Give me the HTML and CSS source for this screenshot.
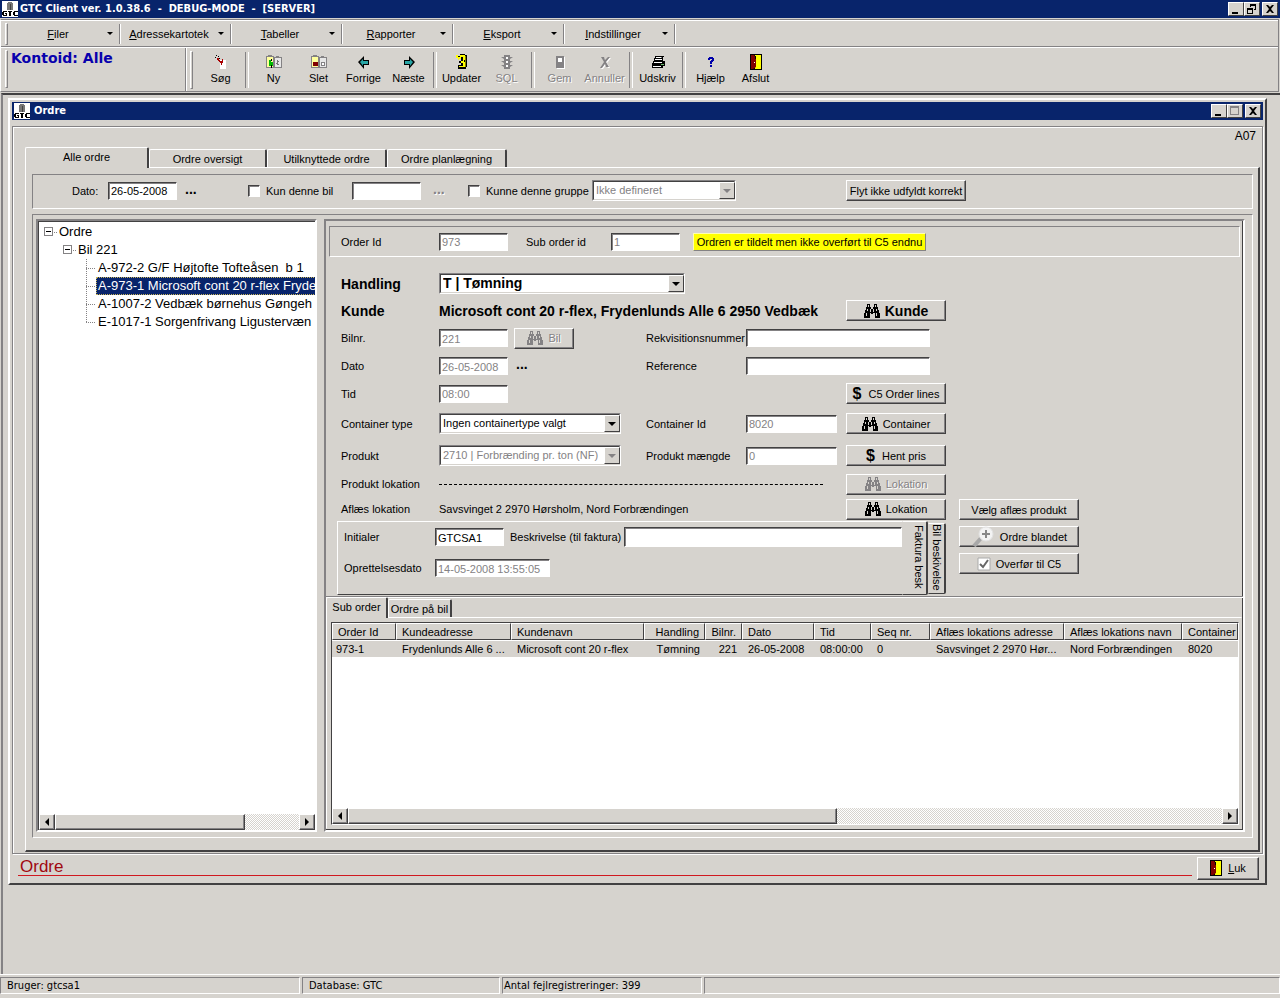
FILE: index.html
```html
<!DOCTYPE html>
<html lang="da">
<head>
<meta charset="utf-8">
<title>GTC Client</title>
<link rel="stylesheet" href="styles.css">
</head>
<body>
<svg class="defs" aria-hidden="true">
  <symbol id="binoculars" viewBox="0 0 16 14">
    <path fill="currentColor" d="M3 0h3v3h1v2h2V3h1V0h3v3h1v3h1v3h1v5h-5V9H9v1H7V9H6v5H0V9h1V6h1V3h1z"/>
    <path fill="#d6d3ce" d="M4 1h1v2H4zM11 1h1v2h-1zM3 5h1v2H3zM6 5h1v3H6zM9 5h1v3H9zM12 5h1v2h-1zM2 9h1v3H2zM12 9h1v3h-1z"/>
  </symbol>
  <symbol id="door" viewBox="0 0 12 16">
    <path d="M0 0h12v16H0z"/><path fill="#ff0" d="M5 1h6v14H5z"/><path fill="#800000" d="M1 1h3l2 3v9l-3 2H1z"/><path d="M5 2h1v3H5z"/><path fill="#fff" d="M4 8h1v1H4z"/>
  </symbol>
  <symbol id="gtc" viewBox="0 0 16 16">
    <path fill="#fff" d="M0 0h16v16H0z"/><path fill="#777" d="M6 1h4v1h1v7H5V2h1z"/><path fill="#444" d="M8 3h1v6H8z"/>
    <path d="M1 10h4v1H2v3h2v-1H3v-1h2v3H1v-1H0v-3h1zM6 10h4v1H9v4H7v-4H6zM12 10h4v1h-3v3h3v1h-4v-1h-1v-3h1z"/>
  </symbol>
</svg>

<div class="app">
  <header class="titlebar">
    <svg class="logo"><use href="#gtc"/></svg>
    <h1 class="title">GTC Client ver. 1.0.38.6&nbsp; -&nbsp; DEBUG-MODE&nbsp; -&nbsp; [SERVER]</h1>
    <div class="winbtns">
      <button class="winbtn" aria-label="Minimer"><svg viewBox="0 0 10 10"><path d="M1 8h6v2H1z"/></svg></button>
      <button class="winbtn" aria-label="Gendan"><svg viewBox="0 0 10 10"><path d="M3 0h6v6H7V5h1V2H4v1H3zM0 4h6v6H0zM1 6v3h4V6z" fill-rule="evenodd"/></svg></button>
      <button class="winbtn close" aria-label="Luk vindue"><svg viewBox="0 0 10 10"><path d="M1 1h2l2 2 2-2h2L6 5l3 4H7L5 7 3 9H1l3-4z"/></svg></button>
    </div>
  </header>

  <div class="coolbar">
    <nav class="menubar">
      <span class="grip"></span>
      <button class="menu"><span><u>F</u>iler</span><i class="arrow"></i></button>
      <button class="menu"><span><u>A</u>dressekartotek</span><i class="arrow"></i></button>
      <button class="menu"><span><u>T</u>abeller</span><i class="arrow"></i></button>
      <button class="menu"><span><u>R</u>apporter</span><i class="arrow"></i></button>
      <button class="menu"><span><u>E</u>ksport</span><i class="arrow"></i></button>
      <button class="menu"><span><u>I</u>ndstillinger</span><i class="arrow"></i></button>
    </nav>
    <div class="toolrow">
      <div class="account"><span class="grip"></span><span class="account-text">Kontoid: Alle</span></div>
      <div class="toolbar">
        <span class="grip"></span>
        <button class="tool"><svg viewBox="0 0 16 16"><path fill="#fff" d="M7 6h6v9H7z"/><path fill="#a00" d="M4 4h2v2h1v1h2V5h1v4H9v2H8V9H7V8H6V7H5V6H4z"/><path d="M3 1h1v1H3zM5 2h1v1H5zM2 3h1v1H2zM6 4h1v1H6z"/></svg>Søg</button>
        <span class="sep"></span>
        <button class="tool"><svg viewBox="0 0 16 16"><path fill="#848284" d="M0 2h2V1h4v1h2v12H0zM8 3h2V2h3v1h3v11H8z"/><path fill="#ffff9c" d="M1 3h6v10H1z"/><path fill="#e7e7e7" d="M9 4h6v9H9z"/><path fill="#0b0" d="M3 6h2v2h2v4H3z"/><path d="M5 5h1v2H5zM5 11h1v3H5z"/><path fill="#777" d="M11 6h1v1h1v1h-1v2h1v1h-2v-1h-1V9h1z"/></svg>Ny</button>
        <button class="tool"><svg viewBox="0 0 16 16"><path fill="#848284" d="M0 2h2V1h4v1h2v12H0zM8 3h2V2h3v1h3v11H8z"/><path fill="#ffff9c" d="M1 3h6v10H1z"/><path fill="#e7e7e7" d="M9 4h6v9H9z"/><path fill="#800000" d="M2 8h5v4H2z"/><path fill="#848284" d="M10 8h4v4h-4z"/><path fill="#fff" d="M11 9h2v2h-2z"/></svg>Slet</button>
        <button class="tool"><svg viewBox="0 0 16 16"><path d="M2 8l6-6v4h5v5H8v4z"/><path fill="#28a5a5" d="M4 8l3-3v2h5v3H7v2z"/></svg>Forrige</button>
        <button class="tool"><svg viewBox="0 0 16 16"><path d="M14 8L8 2v4H3v5h5v4z"/><path fill="#28a5a5" d="M12 8L9 5v2H4v3h5v2z"/></svg>Næste</button>
        <span class="sep"></span>
        <button class="tool"><svg viewBox="0 0 16 16"><path d="M6 0h5v1h2v12h-1v2H4v-4h3V9H5V7h2V4H3V2h3z"/><path fill="#ff0" d="M6 1h5v5h-1v2h1v5H5v-1h4V9H7V7h2V3H6z"/><path fill="#848200" d="M11 2h1v11h-1z"/><path fill="#ff0" d="M2 1h2v2h3v2H5v1H4V4H2z"/></svg>Updater</button>
        <button class="tool" disabled><svg viewBox="0 0 16 16"><path fill="#848284" d="M5 1h6v2h3l-3 2v2h3l-3 2v2h3l-3 2v2H5v-2l-3-2h3V9L2 7h3V5L2 3h3z"/><path fill="#fff" d="M7 3h2v2H7zM7 7h2v2H7zM7 11h2v2H7z"/></svg>SQL</button>
        <span class="sep"></span>
        <button class="tool" disabled><svg viewBox="0 0 16 16"><path fill="#fff" d="M5 3h8v12H5z"/><path fill="#848284" d="M4 2h8v12H4z"/><path fill="#fff" d="M6 4h4v4H6z"/></svg>Gem</button>
        <button class="tool" disabled><svg viewBox="0 0 16 16"><path fill="#fff" d="M5 4h2l2 3 3-3h2l-4 5 3 5h-2l-2-3-3 4H4l4-6z"/><path fill="#848284" d="M4 3h3l1 3 3-3h2L9 8l3 5H9l-1-3-3 4H3l4-6z"/></svg>Annuller</button>
        <span class="sep"></span>
        <button class="tool"><svg viewBox="0 0 16 16"><path d="M5 2h9v1h-1v4h2v5h-2v2H2V9h1V7h1V4h1z"/><path fill="#fff" d="M6 3h6l-1 1H6zM5 5h7v1H5zM4 8h8v1H4zM3 12h8v1H3z"/><path fill="#6b6" d="M11 10h3v1h-3z"/></svg>Udskriv</button>
        <span class="sep"></span>
        <button class="tool"><svg viewBox="0 0 16 16"><path fill="#00a" d="M6 3h4v1h1v3h-1v1H9v2H7V7h1V6h1V5H7v1H5V4h1zM7 11h2v2H7z"/></svg>Hjælp</button>
        <button class="tool"><svg viewBox="0 0 12 16"><use href="#door"/></svg>Afslut</button>
      </div>
    </div>
  </div>

  <main class="mdi">
    <section class="child">
      <header class="titlebar">
        <svg class="logo"><use href="#gtc"/></svg>
        <h2 class="title">Ordre</h2>
        <div class="winbtns">
          <button class="winbtn" aria-label="Minimer"><svg viewBox="0 0 10 10"><path d="M1 8h6v2H1z"/></svg></button>
          <button class="winbtn" aria-label="Maksimer" disabled><svg viewBox="0 0 10 10"><path fill="#848284" d="M0 0h9v9H0zM1 2v6h7V2z" fill-rule="evenodd"/></svg></button>
          <button class="winbtn close" aria-label="Luk vindue"><svg viewBox="0 0 10 10"><path d="M1 1h2l2 2 2-2h2L6 5l3 4H7L5 7 3 9H1l3-4z"/></svg></button>
        </div>
      </header>

      <div class="frame">
        <div class="code">A07</div>
        <div class="tabs" role="tablist">
          <button class="tab active" role="tab" aria-selected="true">Alle ordre</button>
          <button class="tab" role="tab">Ordre oversigt</button>
          <button class="tab" role="tab">Utilknyttede ordre</button>
          <button class="tab" role="tab">Ordre planlægning</button>
        </div>
        <div class="page">
          <div class="filter">
            <label class="f-date" for="fdate">Dato:</label>
            <input class="field short" id="fdate" type="text" value="26-05-2008">
            <button class="dots d1" aria-label="Vælg dato">...</button>
            <label class="check c1"><input type="checkbox">Kun denne bil</label>
            <input class="field short" type="text" aria-label="Bil">
            <button class="dots d2" aria-label="Vælg bil" disabled>...</button>
            <label class="check c2"><input type="checkbox">Kunne denne gruppe</label>
            <span class="combo group off"><select aria-label="Gruppe" disabled><option>Ikke defineret</option></select><i class="drop"></i></span>
            <button class="btn flyt">Flyt ikke udfyldt korrekt</button>
          </div>

          <div class="split">
            <div class="tree">
              <ul class="nodes">
                <li><span class="exp"></span><span class="node">Ordre</span>
                  <ul>
                    <li><span class="exp"></span><span class="node">Bil 221</span>
                      <ul class="leaves">
                        <li><span class="node">A-972-2 G/F Højtofte Tofteåsen&nbsp; b 1</span></li>
                        <li><span class="node sel">A-973-1 Microsoft cont 20 r-flex Fryde</span></li>
                        <li><span class="node">A-1007-2 Vedbæk børnehus Gøngeh</span></li>
                        <li><span class="node">E-1017-1 Sorgenfrivang Ligustervæn</span></li>
                      </ul>
                    </li>
                  </ul>
                </li>
              </ul>
              <div class="hscroll"><button class="sb left" aria-label="Rul til venstre"></button><span class="thumb t1"></span><button class="sb right" aria-label="Rul til højre"></button></div>
            </div>

            <div class="detail">
              <div class="ids">
                <label class="w-label" for="oid">Order Id</label>
                <input class="field short" id="oid" type="text" value="973" disabled>
                <label class="w-sub" for="sid">Sub order id</label>
                <input class="field short" id="sid" type="text" value="1" disabled>
                <button class="notice">Ordren er tildelt men ikke overført til C5 endnu</button>
              </div>

              <div class="form">
                <label class="lb big" for="handling">Handling</label>
                <span class="combo handling big"><select id="handling"><option>T | Tømning</option></select><i class="drop"></i></span>

                <span class="lb big r2">Kunde</span>
                <span class="big customer">Microsoft cont 20 r-flex, Frydenlunds Alle 6 2950 Vedbæk</span>
                <button class="btn c5 r2 big"><svg><use href="#binoculars"/></svg>Kunde</button>

                <label class="lb r3" for="bil">Bilnr.</label>
                <span class="cell r3"><input class="field short" id="bil" type="text" value="221" disabled><button class="btn bil" disabled><svg><use href="#binoculars"/></svg>Bil</button></span>
                <label class="c3 r3" for="rekv">Rekvisitionsnummer</label>
                <input class="field long r3" id="rekv" type="text">

                <label class="lb r4" for="dato">Dato</label>
                <span class="cell r4"><input class="field short" id="dato" type="text" value="26-05-2008" disabled><button class="dots" aria-label="Vælg dato">...</button></span>
                <label class="c3 r4" for="ref">Reference</label>
                <input class="field long r4" id="ref" type="text">

                <label class="lb r5" for="tid">Tid</label>
                <span class="cell r5"><input class="field short" id="tid" type="text" value="08:00" disabled></span>
                <button class="btn c5 r5"><b class="dollar">$</b>C5 Order lines</button>

                <label class="lb r6" for="ctype">Container type</label>
                <span class="combo mid r6"><select id="ctype"><option>Ingen containertype valgt</option></select><i class="drop"></i></span>
                <label class="c3 r6" for="cid">Container Id</label>
                <input class="field id r6" id="cid" type="text" value="8020" disabled>
                <button class="btn c5 r6"><svg><use href="#binoculars"/></svg>Container</button>

                <label class="lb r7" for="prod">Produkt</label>
                <span class="combo mid off r7"><select id="prod" disabled><option>2710 | Forbrænding pr. ton (NF)</option></select><i class="drop"></i></span>
                <label class="c3 r7" for="amount">Produkt mængde</label>
                <input class="field id r7" id="amount" type="text" value="0" disabled>
                <button class="btn c5 r7"><b class="dollar">$</b>Hent pris</button>

                <span class="lb r8">Produkt lokation</span>
                <span class="dash r8"></span>
                <button class="btn c5 r8" disabled><svg><use href="#binoculars"/></svg>Lokation</button>

                <span class="lb r9">Aflæs lokation</span>
                <span class="place r9">Savsvinget 2 2970 Hørsholm, Nord Forbrændingen</span>
                <button class="btn c5 r9"><svg><use href="#binoculars"/></svg>Lokation</button>

                <div class="side">
                  <button class="btn">Vælg aflæs produkt</button>
                  <button class="btn"><svg class="mag" viewBox="0 0 24 21"><path d="M3 20l8-9" stroke="#a8a8a8" stroke-width="4"/><circle cx="15" cy="8" r="7" fill="#f3f3f3" stroke="#e2e2e2"/><path d="M11 8h8M15 4v8" stroke="#888" stroke-width="2"/></svg>Ordre blandet</button>
                  <button class="btn"><svg class="tick" viewBox="0 0 14 14"><path fill="#fff" stroke="#aaa" d="M1 1h12v12H1z"/><path d="M3 7l3 3 5-7" fill="none" stroke="#666" stroke-width="2"/></svg>Overfør til C5</button>
                </div>

                <div class="invoice">
                  <div class="inv-page">
                    <label for="init">Initialer</label>
                    <input class="field short i1" id="init" type="text" value="GTCSA1">
                    <label for="desc">Beskrivelse (til faktura)</label>
                    <input class="field tall" id="desc" type="text">
                    <label for="created">Oprettelsesdato</label>
                    <input class="field created" id="created" type="text" value="14-05-2008 13:55:05" disabled>
                  </div>
                  <button class="vtab on">Faktura besk</button>
                  <button class="vtab">Bil beskivelse</button>
                </div>
              </div>

              <div class="lower">
                <div class="tabs small" role="tablist">
                  <button class="tab active" role="tab" aria-selected="true">Sub order</button>
                  <button class="tab" role="tab">Ordre på bil</button>
                </div>
                <div class="lowerpage">
                  <div class="list">
                    <table>
                      <colgroup><col class="k64"><col class="k115"><col class="k133"><col class="k61"><col class="k37"><col class="k72"><col class="k57"><col class="k59"><col class="k134"><col class="k118"><col></colgroup>
                      <thead><tr><th>Order Id</th><th>Kundeadresse</th><th>Kundenavn</th><th class="num">Handling</th><th class="num">Bilnr.</th><th>Dato</th><th>Tid</th><th>Seq nr.</th><th>Aflæs lokations adresse</th><th>Aflæs lokations navn</th><th>Container</th></tr></thead>
                      <tbody><tr><td>973-1</td><td>Frydenlunds Alle 6 ...</td><td>Microsoft cont 20 r-flex</td><td class="num">Tømning</td><td class="num">221</td><td>26-05-2008</td><td>08:00:00</td><td>0</td><td>Savsvinget 2 2970 Hør...</td><td>Nord Forbrændingen</td><td>8020</td></tr></tbody>
                    </table>
                    <div class="hscroll"><button class="sb left" aria-label="Rul til venstre"></button><span class="thumb t2"></span><button class="sb right" aria-label="Rul til højre"></button></div>
                  </div>
                </div>
              </div>
            </div>
          </div>
        </div>
      </div>

      <footer class="childfoot">
        <span class="caption">Ordre</span>
        <button class="btn luk"><svg class="door" viewBox="0 0 12 16"><use href="#door"/></svg><span><u>L</u>uk</span></button>
      </footer>
    </section>
  </main>

  <footer class="status">
    <span class="pane p1">Bruger: gtcsa1</span>
    <span class="pane p2">Database: GTC</span>
    <span class="pane p3">Antal fejlregistreringer: 399</span>
    <span class="pane rest"></span>
  </footer>
</div>
</body>
</html>
```
FILE: styles.css
```css
:root {
  --face: #d6d3ce;
  --gray: #848284;
  --dark: #424142;
  --navy: #08246b;
}
* { box-sizing: border-box; }
body {
  margin: 0;
  background: var(--face);
  color: #000;
  font: 11px/14px "Liberation Sans", Arial, sans-serif;
}
button, input, select { font: inherit; color: inherit; margin: 0; border-radius: 0; }
button { background: none; border: 0; padding: 0; white-space: nowrap; }
label, span { white-space: nowrap; }
.defs { position: absolute; width: 0; height: 0; }
.app { min-height: 100vh; display: flex; flex-direction: column; }

/* Title bars */
.titlebar { height: 18px; background: var(--navy); display: flex; align-items: center; padding: 0 2px; flex: none; }
.logo { width: 16px; height: 16px; flex: none; }
.title { margin: 0 0 0 2px; flex: 1; color: #fff; font: bold 11px/16px "DejaVu Sans Condensed", "DejaVu Sans", sans-serif; white-space: nowrap; }
.child .title { margin-left: 4px; }
.winbtns { display: flex; }
.winbtn { width: 16px; height: 14px; background: var(--face); border: 1px solid; border-color: #fff var(--dark) var(--dark) #fff; display: flex; align-items: center; justify-content: center; }
.winbtn svg { width: 10px; height: 10px; }
.winbtn.close { margin-left: 2px; }

/* Menu and tool bars */
.coolbar { border: 1px solid; border-color: var(--gray) var(--gray) var(--gray) #fff; margin: 1px 1px 0 0; box-shadow: inset 0 1px #fff; }
.menubar { display: flex; align-items: center; height: 27px; padding: 1px 0 0 4px; border-bottom: 1px solid var(--gray); }
.grip { width: 3px; height: 22px; border: 1px solid; border-color: #fff var(--gray) var(--gray) #fff; flex: none; }
.menu { width: 111px; height: 20px; display: flex; align-items: center; border-right: 1px solid var(--gray); box-shadow: 1px 0 #fff; padding-right: 6px; }
.menu:first-of-type { margin-left: 1px; }
.menu span { flex: 1; text-align: center; }
.arrow { border: 3px solid transparent; border-top-color: #000; border-bottom: 0; }
.toolrow { display: flex; height: 44px; border-top: 1px solid #fff; }
.account { width: 185px; display: flex; padding: 2px 0 0 4px; border-right: 1px solid var(--gray); }
.account .grip, .toolbar > .grip { height: 38px; }
.account-text { padding-left: 3px; color: #0800ad; font: bold 14px/16px "DejaVu Sans", Verdana, sans-serif; }
.toolbar { flex: 1; display: flex; align-items: center; padding-left: 3px; border-left: 1px solid #fff; }
.toolbar > .grip { margin-right: 5px; }
.tool { width: 45px; height: 38px; display: flex; flex-direction: column; align-items: center; justify-content: space-between; padding: 3px 0 4px; }
.tool svg { width: 16px; height: 16px; flex: none; }
.tool:disabled, .btn:disabled, .dots:disabled { color: var(--gray); text-shadow: 1px 1px #fff; }
.sep { width: 8px; height: 36px; flex: none; display: flex; justify-content: center; }
.sep::before { content: ""; width: 2px; border-left: 1px solid var(--gray); border-right: 1px solid #fff; }

/* Work area */
.mdi { flex: 1; display: flex; flex-direction: column; border: 2px solid; border-width: 2px 0 0 2px; border-color: var(--dark) transparent transparent var(--gray); margin: 1px 0 0 1px; }
.child { flex: 1; display: flex; flex-direction: column; margin: 3px 13px 89px 5px; padding: 2px; border: 2px solid; border-color: #fff var(--dark) var(--dark) #fff; }
.frame { flex: 1; margin-top: 6px; display: flex; flex-direction: column; border: 1px solid var(--gray); box-shadow: inset 1px 1px #fff, 1px 1px #fff; padding: 1px 2px 1px 12px; }
.code { height: 19px; line-height: 17px; text-align: right; padding-right: 4px; font-size: 12px; }

/* Tabs */
.tabs { display: flex; align-items: flex-end; height: 20px; }
.tab { width: 120px; height: 18px; border: 1px solid; border-color: #fff var(--dark) transparent #fff; border-bottom: 0; border-right-width: 2px; border-radius: 2px 2px 0 0; }
.tab.active { width: 124px; height: 21px; margin-bottom: -1px; padding-bottom: 2px; background: var(--face); z-index: 1; }
.tab:nth-child(2) { width: 118px; }
.page { flex: 1; display: flex; flex-direction: column; gap: 5px; border: 1px solid; border-color: #fff var(--dark) var(--dark) #fff; border-right-width: 2px; border-bottom-width: 2px; padding: 6px 5px 12px 6px; }

/* Controls */
.field { height: 18px; min-width: 0; background: #fff; border: 1px solid; border-color: var(--dark) #fff #fff var(--dark); box-shadow: inset 1px 1px var(--gray); padding: 1px 2px 0; outline: 0; }
.field:disabled { color: var(--gray); background: #fff; }
.field.short { width: 69px; flex: none; }
.btn { height: 21px; display: flex; align-items: center; justify-content: center; gap: 5px; background: var(--face); border: 1px solid; border-color: #fff var(--dark) var(--dark) #fff; box-shadow: inset -1px -1px var(--gray); }
.btn svg { width: 16px; height: 14px; flex: none; }
.dollar { font-size: 16px; line-height: 16px; margin-right: 2px; }
.dots { font-weight: bold; font-size: 14px; line-height: 14px; height: 18px; padding-bottom: 6px; text-align: left; padding-left: 8px; }
.combo { position: relative; display: block; height: 21px; border: 1px solid; border-color: var(--gray) #fff #fff var(--gray); }
.combo select { appearance: none; display: block; width: 100%; height: 19px; border: 1px solid; border-color: var(--dark) var(--face) var(--face) var(--dark); background: #fff; padding: 0 18px 2px 2px; outline: 0; opacity: 1; }
.combo.handling select { padding-bottom: 0; line-height: 17px; }
.combo.off select { color: var(--gray); }
.drop { position: absolute; top: 1px; right: 0; width: 16px; height: 17px; background: var(--face); border: 1px solid; border-color: #fff var(--dark) var(--dark) #fff; display: flex; align-items: center; justify-content: center; pointer-events: none; }
.drop::before { content: ""; border: 4px solid transparent; border-top-color: #000; border-bottom: 0; }
.off .drop::before { border-top-color: var(--gray); }
.check { display: flex; align-items: center; gap: 6px; }
.check input { appearance: none; width: 12px; height: 12px; background: #fff; border: 1px solid; border-color: var(--dark) #fff #fff var(--dark); box-shadow: inset 1px 1px var(--gray); }

/* Filter bar */
.filter { height: 35px; display: flex; align-items: center; border: 1px solid; border-color: var(--gray) #fff #fff var(--gray); padding-bottom: 2px; }
.f-date { width: 75px; padding-left: 39px; }
.d1 { width: 71px; }
.c1 { width: 104px; }
.d2 { width: 47px; padding-left: 12px; }
.c2 { width: 124px; }
.group { width: 144px; }
.flyt { width: 120px; margin-left: 110px; }

.split { flex: 1; display: flex; gap: 7px; border: 1px solid; border-color: var(--gray) #fff #fff var(--gray); padding: 4px 7px 5px 3px; }

/* Tree */
.tree { width: 281px; flex: none; display: flex; flex-direction: column; justify-content: space-between; background: #fff; border: 2px solid; border-color: var(--gray) #fff #fff var(--gray); box-shadow: inset 1px 1px var(--dark); padding-left: 1px; overflow: hidden; }
.tree ul { list-style: none; margin: 0; padding: 0 0 0 19px; }
.tree .nodes { padding: 2px 0 0 5px; font-size: 13px; line-height: 18px; }
.exp { display: inline-block; width: 9px; height: 9px; border: 1px solid var(--gray); background: linear-gradient(#000, #000) center / 5px 1px no-repeat; }
.exp + .node::before { content: ""; display: inline-block; width: 3px; margin-right: 2px; border-top: 1px dotted var(--gray); vertical-align: middle; }
.node { display: inline-block; height: 18px; padding: 0 2px; vertical-align: top; }
.exp + .node { padding-left: 1px; }
.tree .leaves { padding-left: 23px; }
.leaves li { display: flex; align-items: center; background: repeating-linear-gradient(var(--gray) 0 1px, transparent 1px 2px) 0 0 / 1px 100% no-repeat; }
.leaves li:last-child { background-size: 1px 9px; }
.leaves li::before { content: ""; width: 9px; border-top: 1px dotted var(--gray); margin-right: 1px; flex: none; }
.sel { background: var(--navy); color: #fff; outline: 1px dotted #c8b45a; outline-offset: -1px; }

/* Scroll bars */
.hscroll { display: flex; height: 16px; flex: none; background: repeating-conic-gradient(#fff 0 25%, var(--face) 0 50%) 0 0 / 2px 2px; }
.sb, .thumb { background: var(--face); border: 1px solid; border-color: #fff var(--dark) var(--dark) #fff; box-shadow: inset -1px -1px var(--gray); }
.sb { width: 16px; display: flex; align-items: center; justify-content: center; flex: none; }
.sb::before { content: ""; border: 4px solid transparent; }
.sb.left::before { border-right-color: #000; border-left: 0; }
.sb.right::before { border-left-color: #000; border-right: 0; }
.sb.right { margin-left: auto; }
.t1 { width: 69%; }
.t2 { width: 54%; }

/* Detail panel */
.detail { flex: 1; min-width: 0; display: flex; flex-direction: column; border: 2px solid; border-color: var(--gray) #fff #fff var(--gray); box-shadow: inset -1px -1px var(--dark); }
.ids { height: 31px; margin: 5px 3px 0; display: flex; align-items: center; border: 1px solid; border-color: var(--gray) #fff #fff var(--gray); padding-left: 11px; }
.w-label { width: 98px; }
.w-sub { width: 103px; padding-left: 18px; }
.notice { width: 233px; height: 18px; margin-left: 13px; background: #ff0; border: 1px solid; border-color: #ffffb0 var(--gray) var(--gray) #ffffb0; }
.form { display: grid; grid-template-columns: 102px 207px 100px 100px 100px 120px; grid-template-rows: 27px 27px 28px 28px 27px 33px 31px 26px 24px 75px; align-items: center; padding: 13px 0 0 11px; }
.form .c5 { grid-column: 5; }
.form .c3 { grid-column: 3; }
.lb { grid-column: 1; padding-left: 4px; }
.big { font-size: 14px; font-weight: bold; }
.r2 { grid-row: 2; }
.r3 { grid-row: 3; }
.r4 { grid-row: 4; }
.r5 { grid-row: 5; }
.r6 { grid-row: 6; }
.r7 { grid-row: 7; }
.r8 { grid-row: 8; }
.r9 { grid-row: 9; }
.handling { grid-column: 2 / 4; width: 246px; }
.customer { grid-column: 2 / 5; grid-row: 2; }
.cell { grid-column: 2; display: flex; align-items: center; }
.bil { width: 60px; margin-left: 6px; }
.long { grid-column: 4 / 6; width: 184px; }
.mid { grid-column: 2; width: 182px; }
.id { grid-column: 4; width: 91px; }
.dash { grid-column: 2 / 5; width: 384px; border-top: 1px dashed #000; }
.place { grid-column: 2 / 5; }
.side { grid-column: 6; grid-row: 9 / 11; align-self: start; display: flex; flex-direction: column; gap: 6px; margin-left: 13px; width: 120px; padding-top: 2px; }
.btn .mag { width: 24px; height: 21px; }
.btn .tick { width: 14px; height: 14px; }
.invoice { grid-column: 1 / 6; grid-row: 10; align-self: stretch; display: flex; align-items: flex-start; }
.inv-page { flex: 1; height: 74px; display: grid; grid-template-columns: 91px 75px 114px 1fr; grid-template-rows: 30px 32px; align-items: center; border: 1px solid; border-color: #fff transparent var(--dark) #fff; padding-left: 6px; }
.tall { height: 20px; }
.created { width: 115px; }
.vtab { writing-mode: vertical-rl; width: 18px; height: 71px; margin-top: 2px; text-align: left; border: 1px solid; border-color: #fff var(--dark) var(--dark) transparent; border-right-width: 2px; border-radius: 0 2px 2px 0; }
.vtab.on { width: 25px; height: 74px; margin-top: 0; padding: 3px 0 0 8px; border-left: 0; }

.lower { flex: 1; display: flex; flex-direction: column; border-top: 1px solid var(--gray); box-shadow: inset 0 1px #fff; padding: 0 1px 1px 0; }
.tabs.small .tab { width: 64px; }
.tabs.small .tab.active { width: 62px; }
.lowerpage { flex: 1; display: flex; border: 1px solid; border-color: #fff transparent transparent #fff; padding: 4px 2px 3px 4px; }
.list { flex: 1; min-width: 0; display: flex; flex-direction: column; justify-content: space-between; background: #fff; border: 1px solid; border-color: var(--dark) #fff #fff var(--dark); overflow: hidden; }
table { width: 100%; table-layout: fixed; border-collapse: separate; border-spacing: 0; }
th, td { font-weight: normal; text-align: left; white-space: nowrap; overflow: hidden; padding: 0 0 0 6px; }
th { height: 17px; background: var(--face); border: 1px solid; border-color: #fff var(--dark) var(--dark) #fff; padding-left: 5px; }
td { height: 16px; background: var(--face); }
td:first-child { padding-left: 4px; }
.num { text-align: right; padding: 0 5px 0 0; }
tbody::before { content: ""; display: table-row; height: 1px; }
.k64 { width: 64px; }
.k115 { width: 115px; }
.k133 { width: 133px; }
.k61 { width: 61px; }
.k37 { width: 37px; }
.k72 { width: 72px; }
.k57 { width: 57px; }
.k59 { width: 59px; }
.k134 { width: 134px; }
.k118 { width: 118px; }

/* Child footer */
.childfoot { height: 27px; display: flex; align-items: center; gap: 5px; padding: 1px 4px 0 6px; }
.caption { flex: 1; height: 16px; border-bottom: 1px solid #d01820; color: #a00810; font-size: 17px; line-height: 14px; padding-left: 2px; }
.luk { width: 62px; height: 23px; gap: 6px; }
.btn .door { width: 12px; height: 16px; }

/* Status bar */
.status { display: flex; gap: 2px; height: 24px; border-top: 1px solid #fff; padding: 2px 0 4px; font: 11px/15px "DejaVu Sans Condensed", "DejaVu Sans", sans-serif; }
.pane { border: 1px solid; border-color: var(--gray) #fff #fff var(--gray); padding-left: 6px; }
.p1 { width: 300px; }
.p2 { width: 198px; }
.p3 { width: 200px; padding-left: 1px; }
.rest { flex: 1; }
```
